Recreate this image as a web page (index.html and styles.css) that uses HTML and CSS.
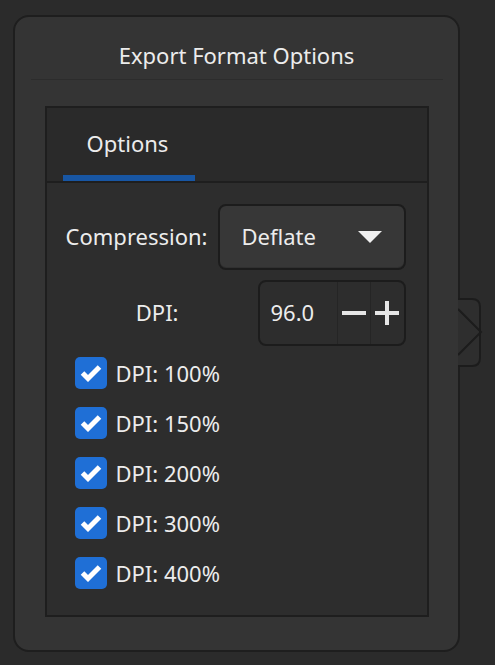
FILE: index.html
```html
<!DOCTYPE html>
<html>
<head>
<meta charset="utf-8">
<link rel="stylesheet" href="styles.css">
</head>
<body>
<div class="panel">
  <div class="title">Export Format Options</div>
  <div class="sep"></div>
  <div class="box">
    <div class="tabs">
      <div class="tab">Options</div>
    </div>
    <div class="content">
      <div class="row row-comp">
        <span class="label label-comp">Compression:</span>
        <div class="dropdown">
          <span class="txt">Deflate</span>
          <svg class="caret" width="24" height="13" viewBox="0 0 24 13"><polygon points="0,0 24,0 12,12" fill="#f0f0f0"/></svg>
        </div>
      </div>
      <div class="row row-dpi">
        <span class="label label-dpi">DPI:</span>
        <div class="spin">
          <span class="spin-val"><span class="txt">96.0</span></span>
          <span class="spin-btn"><svg width="24" height="24" viewBox="0 0 24 24"><rect x="0" y="10" width="24" height="4" fill="#e6e6e6"/></svg></span>
          <span class="spin-btn"><svg width="24" height="24" viewBox="0 0 24 24"><rect x="0" y="10" width="24" height="4" fill="#e6e6e6"/><rect x="10" y="0" width="4" height="24" fill="#e6e6e6"/></svg></span>
        </div>
      </div>
      <div class="checks">
        <label class="check"><span class="cb"><svg width="22" height="18" viewBox="0 0 22 18"><path d="M2.5 9 L8 14.5 L19.5 3" fill="none" stroke="#fff" stroke-width="5"/></svg></span><span class="txt">DPI: 100%</span></label>
        <label class="check"><span class="cb"><svg width="22" height="18" viewBox="0 0 22 18"><path d="M2.5 9 L8 14.5 L19.5 3" fill="none" stroke="#fff" stroke-width="5"/></svg></span><span class="txt">DPI: 150%</span></label>
        <label class="check"><span class="cb"><svg width="22" height="18" viewBox="0 0 22 18"><path d="M2.5 9 L8 14.5 L19.5 3" fill="none" stroke="#fff" stroke-width="5"/></svg></span><span class="txt">DPI: 200%</span></label>
        <label class="check"><span class="cb"><svg width="22" height="18" viewBox="0 0 22 18"><path d="M2.5 9 L8 14.5 L19.5 3" fill="none" stroke="#fff" stroke-width="5"/></svg></span><span class="txt">DPI: 300%</span></label>
        <label class="check"><span class="cb"><svg width="22" height="18" viewBox="0 0 22 18"><path d="M2.5 9 L8 14.5 L19.5 3" fill="none" stroke="#fff" stroke-width="5"/></svg></span><span class="txt">DPI: 400%</span></label>
      </div>
    </div>
  </div>
  <svg class="side-tab" width="26" height="70" viewBox="0 0 26 70">
    <path d="M0 1 H14 Q22 1 22 9 V60 Q22 68 14 68 H0" fill="#2e2e2e" stroke="#1c1c1c" stroke-width="2"/>
    <path d="M0 11 L23 34 L0 57" fill="none" stroke="#1c1c1c" stroke-width="2"/>
  </svg>
</div>
</body>
</html>
```

FILE: styles.css
```css
* { box-sizing: border-box; }
html, body { margin: 0; padding: 0; }
body {
  background: #2b2b2b;
  width: 495px;
  height: 665px;
  padding: 15px 0 0 13px;
  font-family: "Noto Sans", "Open Sans", sans-serif;
  color: #ececec;
  overflow: hidden;
}
.panel {
  position: relative;
  width: 447px;
  height: 637px;
  background: #343434;
  border: 2px solid #1e1e1e;
  border-radius: 16px;
  display: flex;
  flex-direction: column;
  align-items: center;
}
.title {
  height: 62px;
  padding-top: 22px;
  font-size: 22px;
  line-height: 32px;
  text-align: center;
  width: 100%;
}
.sep {
  width: 412px;
  height: 1px;
  background: #2c2c2c;
}
.box {
  margin-top: 26px;
  width: 384px;
  height: 511px;
  border: 2px solid #1e1e1e;
  background: #2d2d2d;
  display: flex;
  flex-direction: column;
}
.tabs {
  height: 75px;
  background: #2a2a2a;
  border-bottom: 2px solid #1e1e1e;
  display: flex;
  padding-left: 16px;
}
.tab {
  width: 132px;
  height: 73px;
  border-bottom: 6px solid #1856a3;
  font-size: 22px;
  text-align: center;
  padding-top: 19px;
  line-height: 32px;
  padding-right: 2px;
}
.content {
  padding: 21px 21px 0 0;
  display: flex;
  flex-direction: column;
}
.row {
  display: flex;
  justify-content: flex-end;
  align-items: center;
}
.label { font-size: 22px; padding-bottom: 3px; }
.txt { padding-bottom: 3px; }
.label-comp { margin-right: 10px; }
.label-dpi { margin-right: 79px; }
.row-dpi { margin-top: 10px; }
.dropdown {
  width: 188px;
  height: 66px;
  border: 2px solid #1c1c1c;
  border-radius: 8px;
  background: #373737;
  box-shadow: inset 0 -1px 0 #303030;
  display: flex;
  align-items: center;
  justify-content: space-between;
  padding: 0 22px 0 22px;
  font-size: 22px;
}
.caret { margin-top: 1px; }
.spin {
  width: 148px;
  height: 66px;
  border: 2px solid #1c1c1c;
  border-radius: 8px;
  background: #2d2d2d;
  display: flex;
  align-items: stretch;
  font-size: 22px;
}
.spin-val {
  width: 78px;
  display: flex;
  align-items: center;
  padding-left: 11px;
}
.spin-btn {
  width: 34px;
  border-left: 1px solid #252525;
  display: flex;
  align-items: center;
  justify-content: center;
}
.checks {
  padding-left: 28px;
  margin-top: 11px;
  display: flex;
  flex-direction: column;
  gap: 18px;
}
.check {
  display: flex;
  align-items: center;
  font-size: 22px;
  height: 32px;
}
.check .txt { padding-bottom: 1px; }
.cb {
  width: 32px;
  height: 32px;
  border-radius: 5px;
  background: #1f6fd6;
  display: flex;
  align-items: center;
  justify-content: center;
  margin-right: 9px;
}
.side-tab {
  position: absolute;
  left: 443px;
  top: 281px;
}
```
